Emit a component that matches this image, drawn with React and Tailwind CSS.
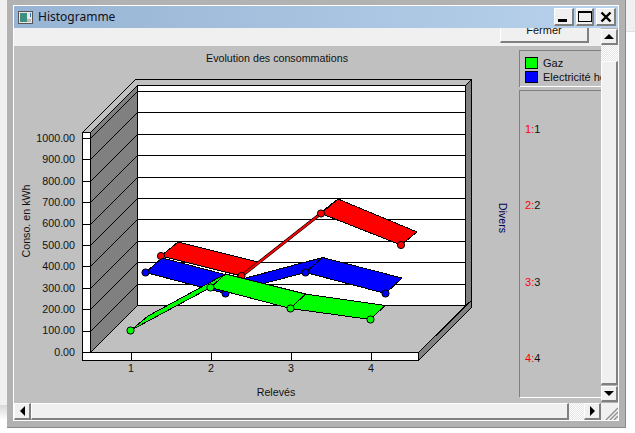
const bevel = "border-t border-l border-t-white border-l-white border-r-2 border-b-2 border-r-[#808080] border-b-[#808080] bg-[#f0f0f0]";
const dither = "bg-[repeating-conic-gradient(#e4e4e4_0_25%,#ffffff_0_50%)] bg-[length:2px_2px]";
const arial = "font-['Liberation_Sans',Arial,sans-serif]";

const series = [
  { color: "#ff0000", pts: [[161, 256], [241.5, 276], [321, 213.5], [401, 245]], back: [[178, 242], [258, 262], [338, 199], [417, 232]], thick: true },
  { color: "#0000ff", pts: [[145.5, 272.5], [225.5, 293.5], [305.5, 272.5], [385.5, 293.5]], back: [[162, 258], [242, 279], [322.5, 257.5], [402, 278]] },
  { color: "#00ff00", pts: [[130.5, 330.5], [210.5, 287.5], [290.5, 308.5], [370.5, 319.5]], back: [[148, 316], [225.5, 274], [305.5, 294], [385, 305.5]] },
];

const step = 21.4;
const ticks = Array.from({ length: 11 }, (_, i) => i);

function Chart() {
  return (
    <svg width="505" height="357" viewBox="14 46 505 357" className="shrink-0 block" fontFamily="'Liberation Sans', Arial, sans-serif" fontSize="10.7" fill="#111">
      <text x="277" y="62" textAnchor="middle">Evolution des consommations</text>
      <g shapeRendering="crispEdges" stroke="#000" strokeWidth="1">
        <polygon points="82.5,132.5 135.5,79.5 471.5,79.5 465.5,85.5 137.5,85.5 90.5,132.5" fill="#c0c0c0" />
        <polygon points="90.5,132.5 137.5,85.5 137.5,305.5 90.5,352.5" fill="#808080" />
        <rect x="137.5" y="85.5" width="328" height="220" fill="#fff" />
        <polygon points="465.5,85.5 471.5,79.5 471.5,300.5 465.5,305.5" fill="#808080" />
        <polygon points="90.5,352.5 137.5,305.5 465.5,305.5 418.5,352.5" fill="#c0c0c0" />
        <polygon points="418.5,352.5 471.5,300.5 471.5,307.5 418.5,360.5" fill="#808080" />
        <rect x="82.5" y="132.5" width="8" height="228" fill="#fff" />
        <rect x="82.5" y="352.5" width="336" height="8" fill="#fff" />
        {ticks.map((i) => {
          const f = Math.round(352 - i * step) + 0.5;
          const b = Math.round(305 - i * step) + 0.5;
          return (
            <g key={i}>
              <line x1="82.5" y1={f} x2="90.5" y2={f} />
              <line x1="90.5" y1={f} x2="137.5" y2={b} />
              <line x1="137.5" y1={b} x2="465.5" y2={b} />
            </g>
          );
        })}
        {[131.5, 211.5, 291.5, 371.5].map((x) => (
          <line key={x} x1={x} y1="352.5" x2={x} y2="360.5" />
        ))}
        {series.map((s) => (
          <g key={s.color} fill={s.color}>
            {s.pts.slice(0, 3).map((p, i) => (
              <polygon key={i} points={`${p[0]},${p[1]} ${s.pts[i + 1][0]},${s.pts[i + 1][1]} ${s.back[i + 1][0]},${s.back[i + 1][1]} ${s.back[i][0]},${s.back[i][1]}`} />
            ))}
            {s.thick && (
              <>
                <line x1={s.pts[1][0]} y1={s.pts[1][1]} x2={s.pts[2][0]} y2={s.pts[2][1]} stroke="#000" strokeWidth="3.2" shapeRendering="auto" />
                <line x1={s.pts[1][0]} y1={s.pts[1][1]} x2={s.pts[2][0]} y2={s.pts[2][1]} stroke={s.color} strokeWidth="2" shapeRendering="auto" />
              </>
            )}
            {s.pts.map((p, i) => (
              <circle key={i} cx={p[0]} cy={p[1]} r="3.6" shapeRendering="auto" />
            ))}
          </g>
        ))}
      </g>
      {ticks.map((i) => (
        <text key={i} x="75" y={355.7 - i * step} textAnchor="end">{(i * 100).toFixed(2)}</text>
      ))}
      {[1, 2, 3, 4].map((n, i) => (
        <text key={n} x={131 + i * 80} y="372" textAnchor="middle">{n}</text>
      ))}
      <text x="276" y="396" textAnchor="middle">Relevés</text>
      <text transform="translate(30 221) rotate(-90)" textAnchor="middle">Conso. en kWh</text>
      <text transform="translate(499 218) rotate(90)" textAnchor="middle" fill="#000050">Divers</text>
    </svg>
  );
}

function Tri({ dir }) {
  const pts = { up: "0,6 10,6 5,1", down: "0,1 10,1 5,6", left: "6,0 6,10 1,5", right: "1,0 1,10 6,5" }[dir];
  const s = dir === "up" || dir === "down" ? [10, 7] : [7, 10];
  return (
    <svg width={s[0]} height={s[1]} viewBox={`0 0 ${s[0]} ${s[1]}`}>
      <polygon points={pts} fill="#000" />
    </svg>
  );
}

function WinBtn({ w, children }) {
  return <div className={`${bevel} ${w} h-[18px] flex items-center justify-center`}>{children}</div>;
}

export default function App() {
  return (
    <div className={`w-[635px] h-[433px] flex bg-white overflow-hidden ${arial}`}>
      <div className="w-[7px] flex flex-col">
        <div className="h-[405px] bg-[#f0f0f0]" />
        <div className="h-[15px] bg-gradient-to-b from-[#d8d8d8] to-white" />
      </div>
      <div className="w-[619px] h-[428px] bg-[#b2b2b2] border-r border-b border-r-[#8a8a8a] border-b-[#8a8a8a] pt-[5px] pl-[6px] pr-[6px] pb-[6px] shrink-0">
        <div className="border-t border-l border-t-white border-l-white border-b border-b-white border-r border-r-white w-[606px] h-[416px] flex flex-col">
          <div className="h-[22px] shrink-0 bg-gradient-to-r from-[#98b4d4] to-[#b8d2ec] flex items-center pl-[4px] pr-[2px]">
            <svg width="15" height="13" viewBox="0 0 15 13" className="shrink-0">
              <rect x="0.5" y="0.5" width="14" height="12" fill="#e8e8e8" stroke="#555" />
              <rect x="2" y="2" width="7" height="9" fill="#3f8f80" />
              <rect x="9" y="8" width="4" height="3" fill="#b8b8b8" />
              <rect x="12" y="2" width="1" height="4" fill="#2a6fc0" />
            </svg>
            <span className="ml-[5px] text-[12px] text-[#101018] font-['Noto_Sans',sans-serif]">Histogramme</span>
            <div className="ml-auto flex items-center gap-[2px]">
              <WinBtn w="w-[20px]">
                <div className="w-[9px] h-[3px] bg-black mt-[8px] mr-[2px]" />
              </WinBtn>
              <WinBtn w="w-[18px]">
                <div className="w-[14px] h-[11px] border border-t-[2px] border-black" />
              </WinBtn>
              <WinBtn w="w-[20px]">
                <svg width="12" height="12" viewBox="0 0 12 12">
                  <path d="M1.5 1.5 L10.5 10.5 M10.5 1.5 L1.5 10.5" stroke="#000" strokeWidth="2.4" />
                </svg>
              </WinBtn>
            </div>
          </div>
          <div className="flex flex-1 min-h-0">
            <div className="w-[587px] flex flex-col min-w-0">
              <div className="h-[18px] shrink-0 bg-[#f0f0f0] overflow-hidden flex justify-end items-end pr-[12px] pb-[3px]">
                <div className={`${bevel} w-[89px] h-[24px] shrink-0 flex items-center justify-center text-[11px] text-[#111]`}>Fermer</div>
              </div>
              <div className="h-[357px] shrink-0 bg-[#c0c0c0] flex overflow-hidden">
                <Chart />
                <div className="flex-1 min-w-0 min-h-0 pt-[4px] pb-[5px] flex flex-col gap-[3px]">
                  <div className="h-[37px] shrink-0 border-t border-l border-[#808080] border-b-0 relative overflow-hidden pl-[5px] pt-[5px] text-[11px] text-[#111] whitespace-nowrap">
                    <div className="flex items-center h-[14px]">
                      <div className="w-[13px] h-[12px] bg-[#00ff00] border border-black shrink-0" />
                      <span className="ml-[5px]">Gaz</span>
                    </div>
                    <div className="flex items-center h-[14px]">
                      <div className="w-[13px] h-[12px] bg-[#0000ff] border border-black shrink-0" />
                      <span className="ml-[5px]">Electricité hors chauffage</span>
                    </div>
                    <div className="absolute left-0 right-0 bottom-0 h-px bg-white" />
                  </div>
                  <div className="flex-1 min-h-0 border-t border-l border-b border-t-[#808080] border-l-[#808080] border-b-white pl-[5px] text-[11px] text-[#111] flex flex-col overflow-hidden">
                    {[1, 2, 3, 4].map((n, i) => (
                      <div key={n} className={i === 0 ? "mt-[30px] h-[76.3px] shrink-0" : "h-[76.3px] shrink-0"}>
                        <span className="text-[#ff0000]">{n}:</span>{n}
                      </div>
                    ))}
                  </div>
                </div>
              </div>
            </div>
            <div className="w-[17px] h-[374px] shrink-0 flex flex-col pt-px">
              <div className={`${bevel} h-[16px] shrink-0 flex items-center justify-center`}><Tri dir="up" /></div>
              <div className={`${dither} h-[16px] shrink-0`} />
              <div className={`${bevel} flex-1`} />
              <div className={`${bevel} h-[16px] shrink-0 flex items-center justify-center mt-[1px]`}><Tri dir="down" /></div>
            </div>
          </div>
          <div className="h-[17px] shrink-0 flex bg-[#f0f0f0]">
            <div className={`${bevel} w-[17px] flex items-center justify-center`}><Tri dir="left" /></div>
            <div className={`${bevel} w-[538px]`} />
            <div className={`${dither} w-[15px]`} />
            <div className={`${bevel} w-[17px] flex items-center justify-center`}><Tri dir="right" /></div>
            <div className="flex-1 flex items-end justify-end">
              <svg width="13" height="13" viewBox="0 0 13 13">
                <path d="M1 13 L13 1 M5 13 L13 5 M9 13 L13 9" stroke="#909090" strokeWidth="1.4" />
              </svg>
            </div>
          </div>
        </div>
      </div>
      <div className="flex-1 min-w-0">
        <div className="h-[32px] bg-[#f0f0f0] border-b border-b-[#e0e0e0]" />
      </div>
    </div>
  );
}
